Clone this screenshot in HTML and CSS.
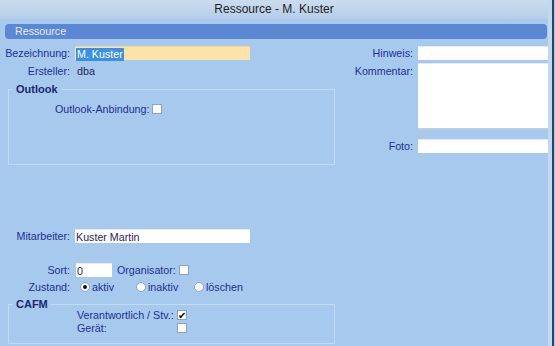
FILE: index.html
```html
<!DOCTYPE html>
<html lang="de">
<head>
    <meta charset="UTF-8">
    <title>Ressource - M. Kuster</title>
    <link rel="stylesheet" href="styles.css">
</head>
<body>
    <div class="window">
        <div class="titlebar">Ressource - M. Kuster</div>
        <div class="section-bar">Ressource</div>

        <div class="form">
            <div class="col-left">
                <div class="row">
                    <span class="lbl">Bezeichnung:</span>
                    <div class="field wide highlight"><span class="sel">M. Kuster</span></div>
                </div>
                <div class="row r-erst">
                    <span class="lbl">Ersteller:</span>
                    <span class="value">dba</span>
                </div>

                <fieldset class="group outlook">
                    <legend>Outlook</legend>
                    <div class="group-body">
                        <div class="row">
                            <span>Outlook-Anbindung:</span>
                            <span class="check"></span>
                        </div>
                    </div>
                </fieldset>

                <div class="row r-mit">
                    <span class="lbl">Mitarbeiter:</span>
                    <div class="field wide">Kuster Martin</div>
                </div>
                <div class="row r-sort">
                    <span class="lbl">Sort:</span>
                    <div class="field short">0</div>
                    <span>Organisator:</span>
                    <span class="check"></span>
                </div>
                <div class="row r-zust">
                    <span class="lbl">Zustand:</span>
                    <span class="option opt-aktiv"><span class="radio on"></span>aktiv</span>
                    <span class="option opt-inaktiv"><span class="radio"></span>inaktiv</span>
                    <span class="option"><span class="radio"></span>löschen</span>
                </div>

                <fieldset class="group cafm">
                    <legend>CAFM</legend>
                    <div class="group-body">
                        <div class="row">
                            <span class="cafm-lbl">Verantwortlich / Stv.:</span>
                            <span class="check on">&#10004;</span>
                        </div>
                        <div class="row">
                            <span class="cafm-lbl">Gerät:</span>
                            <span class="check"></span>
                        </div>
                    </div>
                </fieldset>
            </div>

            <div class="col-right">
                <div class="row">
                    <span class="lbl-r">Hinweis:</span>
                    <div class="field side"></div>
                </div>
                <div class="row r-komm">
                    <span class="lbl-r">Kommentar:</span>
                    <div class="field side memo"></div>
                </div>
                <div class="row r-foto">
                    <span class="lbl-r">Foto:</span>
                    <div class="field side"></div>
                </div>
            </div>
        </div>
    </div>
</body>
</html>
```

FILE: styles.css
```css
:root {
    --window-bg: #a8c9ee;
    --label: #1c2f92;
    --legend: #16286e;
    --bar: #5b87d3;
    --group-line: #c3daf3;
}

body {
    margin: 0;
    background-color: var(--window-bg);
    font-family: 'Liberation Sans', Arial, sans-serif;
    font-size: 10.7px;
    color: var(--label);
}

.window {
    width: 548px;
    height: 346px;
    border-right: 4px solid #c0d8f0;
    box-shadow: 2px 0 0 #27445f;
}

.titlebar {
    height: 19px;
    line-height: 19px;
    text-align: center;
    font-size: 12px;
    color: #1e1e1e;
    background: linear-gradient(#cadcef, #b6cee9);
}

.section-bar {
    margin: 5px 1px 0 5px;
    height: 15px;
    line-height: 15px;
    padding-left: 10px;
    border-radius: 4px;
    background-color: var(--bar);
    color: #e4ecf9;
}

.form {
    display: flex;
    margin-top: 7px;
}

.col-left {
    width: 340px;
}

.col-right {
    flex: 1;
}

.row {
    display: flex;
    align-items: center;
    gap: 5px;
    height: 14px;
}

.lbl {
    width: 70px;
    text-align: right;
}

.lbl-r {
    width: 73px;
    text-align: right;
}

.value {
    padding-left: 2px;
    color: #1b2758;
}

.field {
    height: 14px;
    line-height: 14px;
    box-sizing: border-box;
    background-color: #fff;
    border-top: 1px solid #e4ebf3;
    color: #2a2464;
    padding-left: 1px;
}

.wide {
    width: 175px;
}

.short {
    width: 36px;
    margin-left: 1px;
}

.side {
    width: 130px;
}

.highlight {
    background-color: #fee3a8;
    border-top-color: #f0d699;
}

.sel {
    display: inline-block;
    height: 13px;
    line-height: 13px;
    padding: 0 1px;
    background-color: #3a90e8;
    color: #fff;
}

.r-erst {
    margin-top: 4px;
}

.group {
    margin: 6px 0 0 8px;
    padding: 0;
    width: 327px;
    box-sizing: border-box;
    border: 1px solid var(--group-line);
}

.group legend {
    margin-left: 4px;
    padding: 0 3px;
    line-height: 10px;
    font-weight: bold;
    font-size: 11px;
    color: var(--legend);
}

.outlook .group-body {
    height: 70px;
    padding: 8px 0 0 46px;
    box-sizing: border-box;
}

.outlook .row {
    gap: 3px;
    height: 13px;
}

.check {
    display: inline-block;
    width: 10px;
    height: 10px;
    background-color: #fff;
    border: 1px solid #8fa3bd;
    box-sizing: border-box;
    font-size: 10px;
    line-height: 9px;
    text-align: center;
    color: #000;
}

.radio {
    display: inline-block;
    width: 10px;
    height: 10px;
    box-sizing: border-box;
    border-radius: 50%;
    border: 1px solid #8fa3bd;
    background-color: #fff;
    margin-right: 2px;
    position: relative;
}

.radio.on::after {
    content: "";
    position: absolute;
    left: 2px;
    top: 2px;
    width: 4px;
    height: 4px;
    border-radius: 50%;
    background-color: #111;
}

.r-mit {
    margin-top: 64px;
}

.r-sort {
    margin-top: 20px;
}

.r-sort .check {
    margin-left: -2px;
}

.r-zust {
    margin-top: 4px;
    height: 12px;
}

.option {
    display: inline-flex;
    align-items: center;
}

.opt-aktiv {
    margin-left: 5px;
    width: 51px;
}

.opt-inaktiv {
    width: 53px;
}

.cafm .group-body {
    padding: 0 0 8px 68px;
}

.cafm .row {
    gap: 0;
    height: 12px;
    margin-bottom: 1px;
}

.cafm-lbl {
    width: 100px;
}

.r-komm {
    margin-top: 3px;
    align-items: flex-start;
    height: 67px;
}

.r-komm .lbl-r {
    padding-top: 2px;
}

.memo {
    height: 67px;
    border-bottom: 2px solid #bccde2;
}

.r-foto {
    margin-top: 9px;
}
```
